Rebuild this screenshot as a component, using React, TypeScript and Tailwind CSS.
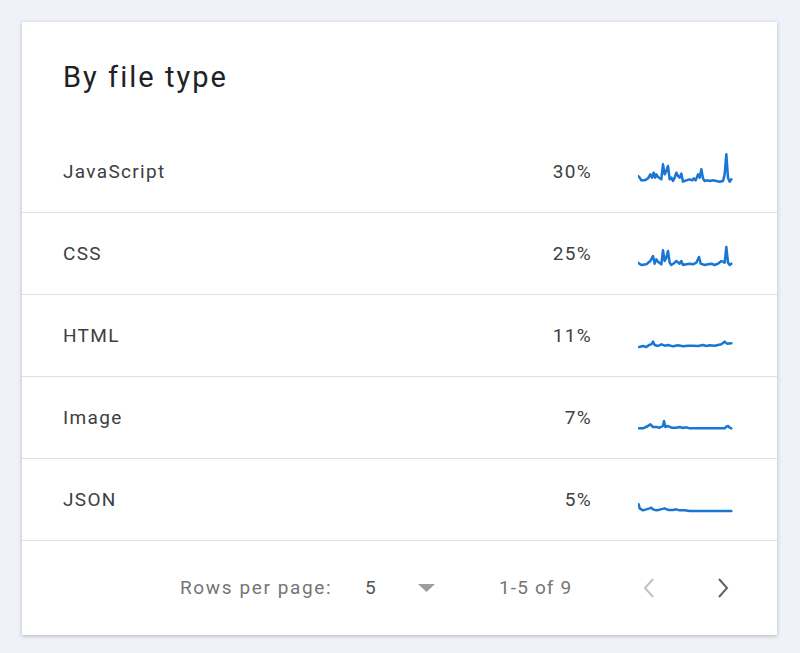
import React from "react";

type Row = { name: string; pct: string; vb: string; pts: string };

const rows: Row[] = [
  {
    name: "JavaScript",
    pct: "30%",
    vb: "55 33 285 120",
    pts: "55,105 60,110 65,118 75,118 85,112 92,100 97,110 102,95 106,110 110,100 115,108 125,115 130,70 135,100 140,90 145,75 150,115 155,110 160,120 165,110 170,95 175,105 180,110 185,98 190,122 200,118 210,115 218,118 222,112 228,118 235,100 240,110 245,85 250,112 255,120 262,118 270,120 280,118 290,120 300,122 310,120 315,100 320,40 325,110 330,122 335,115",
  },
  {
    name: "CSS",
    pct: "25%",
    vb: "55 279 285 120",
    pts: "55,365 65,372 80,370 92,360 100,345 105,368 110,355 115,362 125,370 130,328 135,360 140,350 145,330 150,365 155,372 165,365 170,360 180,368 185,360 190,372 200,370 210,368 220,370 230,365 238,348 243,368 255,372 265,370 275,368 285,372 295,368 305,360 315,365 320,318 325,365 330,372 335,368",
  },
  {
    name: "HTML",
    pct: "11%",
    vb: "55 15 285 120",
    pts: "58,108 70,105 80,108 88,102 95,100 100,92 105,102 115,105 125,100 135,104 145,102 160,106 175,103 190,106 205,104 220,104 235,105 250,102 260,105 270,103 285,104 295,102 305,100 315,92 322,98 335,97",
  },
  {
    name: "Image",
    pct: "7%",
    vb: "55 261 285 120",
    pts: "58,352 70,352 85,345 92,340 100,348 110,348 120,350 130,345 133,330 137,348 145,345 155,350 170,350 180,348 190,351 200,349 210,352 225,352 250,352 280,352 315,352 320,347 325,345 330,350 335,352",
  },
  {
    name: "JSON",
    pct: "5%",
    vb: "55 507 285 120",
    pts: "57,580 60,592 70,598 80,595 90,592 95,590 100,595 110,598 120,596 135,592 145,597 160,597 170,595 180,598 195,598 210,600 250,600 300,600 335,600",
  },
];

export default function App() {
  return (
    <div
      className="w-[800px] h-[653px] bg-[#eff3f9] pt-[22px] pl-[22px]"
      style={{ fontFamily: "Roboto, 'Noto Sans', sans-serif" }}
    >
      <div className="w-[755px] h-[613px] bg-white shadow-[0_1px_4px_rgba(0,0,0,0.25)] flex flex-col">
        <div className="h-[109px] pl-[41px] flex items-center pt-[1px]">
          <h1 className="text-[29px] text-[#202124] leading-none tracking-[0.07em]">By file type</h1>
        </div>
        {rows.map((r) => (
          <div
            key={r.name}
            className="h-[82px] border-b border-[#e0e0e0] flex items-center pl-[41px] pr-[44px] pt-[1px]"
          >
            <div className="flex-1 text-[19px] text-[#3c4043] tracking-[0.07em]">{r.name}</div>
            <div className="w-[80px] text-right text-[19px] text-[#3c4043] tracking-[0.07em]">{r.pct}</div>
            <div className="ml-[46px] w-[95px] h-[40px]">
              <svg width="95" height="40" viewBox={r.vb} preserveAspectRatio="none">
                <polyline
                  points={r.pts}
                  fill="none"
                  stroke="#1976d2"
                  strokeWidth="2.5"
                  strokeLinejoin="round"
                  strokeLinecap="round"
                  vectorEffect="non-scaling-stroke"
                />
              </svg>
            </div>
          </div>
        ))}
        <div className="flex-1 flex items-center pl-[158px] text-[19px] text-[#757575] tracking-[0.06em]">
          <div className="w-[185px] tracking-[0.085em]">Rows per page:</div>
          <div className="w-[53px] text-[#555555]">5</div>
          <div className="w-[81px] flex items-center">
            <svg width="17" height="8" viewBox="0 0 17 8">
              <polygon points="0,0 17,0 8.5,8" fill="#9e9e9e" />
            </svg>
          </div>
          <div className="w-[137px]">1-5 of 9</div>
          <div className="w-[74px] flex items-center pl-[7px]">
            <svg width="12" height="22" viewBox="0 0 12 22">
              <polyline points="10,2 2,11 10,20" fill="none" stroke="#bdc1c6" strokeWidth="2" />
            </svg>
          </div>
          <div className="flex items-center pl-[7px]">
            <svg width="12" height="22" viewBox="0 0 12 22">
              <polyline points="2,2 10,11 2,20" fill="none" stroke="#5f6368" strokeWidth="2" />
            </svg>
          </div>
        </div>
      </div>
    </div>
  );
}
